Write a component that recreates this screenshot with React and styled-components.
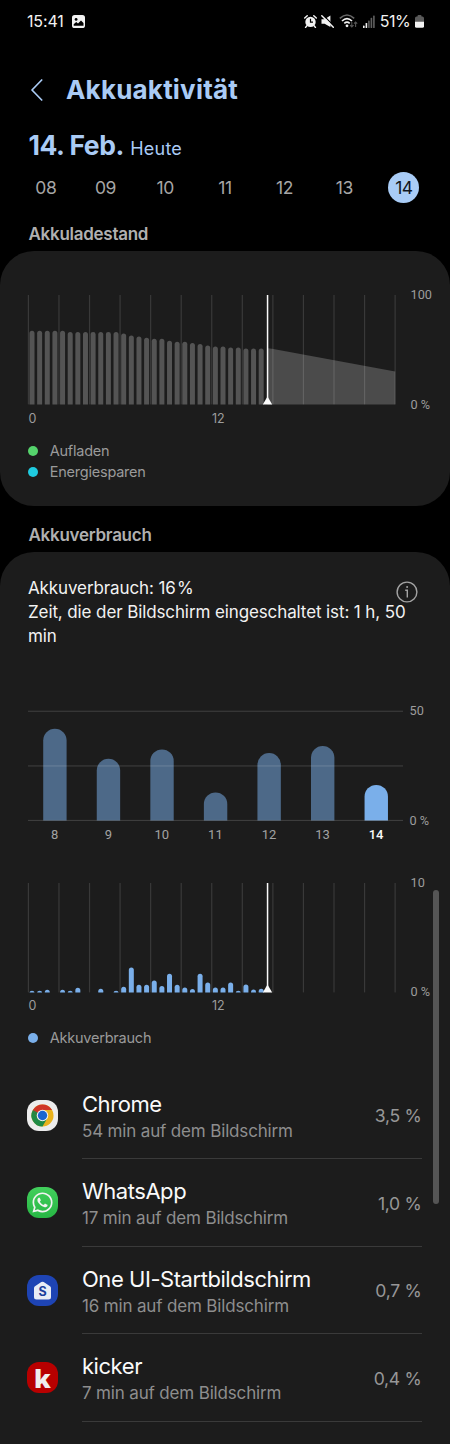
import React from "react";
import styled, { createGlobalStyle } from "styled-components";
import { FaWhatsapp } from "react-icons/fa";

const GlobalStyle = createGlobalStyle`
    * {
        box-sizing: border-box;
    }

    body {
        margin: 0;
        background: #000;
        font-family: Inter, Roboto, sans-serif;
    }
`;

const Screen = styled.main`
    position: relative;
    display: flex;
    flex-direction: column;
    width: 450px;
    height: 1444px;
    overflow: hidden;
    background: #000;
    color: #f5f5f5;
`;

const StatusBar = styled.div`
    display: flex;
    flex: none;
    align-items: center;
    justify-content: space-between;
    height: 42px;
    padding: 0 26px 0 27px;
    color: #f2f2f2;
`;

const StatusGroup = styled.div`
    display: flex;
    align-items: center;
    gap: ${props => props.$gap}px;
`;

const StatusText = styled.span`
    font-size: 16px;
    letter-spacing: ${props => props.$spacing};
    line-height: 20px;
`;

const Header = styled.header`
    display: flex;
    flex: none;
    align-items: center;
    height: 86px;
    padding: 9px 30px 0;
`;

const BackIcon = styled.svg`
    display: block;
    margin-right: 22px;
`;

const Title = styled.h1`
    margin: 0;
    font-size: 26px;
    font-weight: 700;
    letter-spacing: 0.2px;
    line-height: 34px;
    color: #aacbf5;
`;

const DateRow = styled.div`
    display: flex;
    flex: none;
    align-items: baseline;
    gap: 6.5px;
    height: 34px;
    padding: 0 28.5px;
    line-height: 34px;
    color: #aacbf5;
`;

const DateText = styled.span`
    font-size: 26.5px;
    font-weight: 700;
    letter-spacing: -0.45px;
`;

const DateHint = styled.span`
    font-size: 18px;
    letter-spacing: 0.2px;
`;

const Days = styled.div`
    display: grid;
    flex: none;
    grid-template-columns: repeat(7, 59.7px);
    justify-items: center;
    padding: 10px 0 0 16px;
`;

const Day = styled.span`
    width: 31px;
    height: 31px;
    border-radius: 50%;
    background: ${props => props.$active ? "#a9ccf6" : "transparent"};
    color: ${props => props.$active ? "#10151c" : "#a6a6a6"};
    font-size: 17.5px;
    letter-spacing: -0.4px;
    line-height: 31px;
    text-align: center;
`;

const SectionTitle = styled.h2`
    flex: none;
    margin: 0;
    padding: ${props => props.$top}px 28.5px 0;
    font-size: 17px;
    font-weight: 600;
    letter-spacing: -0.27px;
    line-height: 33px;
    color: #b0b0b0;
`;

const Card = styled.section`
    height: ${props => props.$height};
    flex: ${props => props.$height ? "none" : 1};
    padding: ${props => props.$top}px 28px 0;
    border-radius: ${props => props.$height ? "34px" : "34px 34px 0 0"};
    background: #1c1c1c;
`;

const Chart = styled.div`
    display: flex;
    gap: ${props => props.$gap}px;
    height: 109.4px;
    margin-top: ${props => props.$top || 0}px;
`;

const Plot = styled.svg`
    display: block;
    flex: none;
    overflow: visible;
`;

const Scale = styled.div`
    display: flex;
    flex-direction: column;
    justify-content: space-between;
    height: 127.4px;
    margin-top: -9px;
    font-family: Roboto, sans-serif;
    font-size: 12.7px;
    line-height: 18px;
    white-space: nowrap;
    color: #9d9d9d;
`;

const Hours = styled.div`
    display: grid;
    grid-template-columns: 183.5px 1fr;
    padding-left: 0.5px;
    font-size: 12.5px;
    line-height: 27px;
    color: #9d9d9d;
`;

const WeekDays = styled.div`
    display: grid;
    grid-template-columns: repeat(7, 53.56px);
    font-family: Roboto, sans-serif;
    font-size: 13px;
    line-height: 27px;
    text-align: center;
    color: #a3a3a3;
`;

const WeekDay = styled.span`
    color: ${props => props.$active ? "#fafafa" : "inherit"};
    font-weight: ${props => props.$active ? 500 : 400};
`;

const Legend = styled.div`
    display: flex;
    flex-direction: column;
    margin-top: 8.8px;
`;

const LegendItem = styled.div`
    display: flex;
    align-items: center;
    gap: 11.7px;
    height: 21.3px;
    font-size: 14.5px;
    letter-spacing: -0.22px;
    line-height: 21px;
    color: #9a9a9a;
`;

const LegendText = styled.span`
    margin-top: -1px;
`;

const Dot = styled.span`
    width: 10px;
    height: 10px;
    border-radius: 50%;
    background: ${props => props.$color};
`;

const Summary = styled.div`
    display: flex;
    height: 72px;
`;

const SummaryText = styled.p`
    flex: none;
    width: 384px;
    margin: 0;
    font-size: 17px;
    letter-spacing: -0.11px;
    line-height: 24px;
    color: #f2f2f2;
`;

const InfoIcon = styled.svg`
    flex: none;
    margin: 4.5px 0 0 -15.7px;
`;

const AppList = styled.div`
    margin: 22.6px 0 0 -1px;
`;

const AppRow = styled.div`
    display: flex;
    align-items: flex-start;
    gap: 24px;
    height: 87.5px;
`;

const AppIcon = styled.span`
    display: flex;
    flex: none;
    align-items: center;
    justify-content: center;
    width: 31px;
    height: 31px;
    margin-top: 28px;
    border-radius: 12px;
    background: ${props => props.$background};
    color: #f2f2f2;
`;

const LogoSvg = styled.svg`
    display: block;
    overflow: visible;
`;

const AppBody = styled.div`
    display: flex;
    align-items: flex-start;
    justify-content: space-between;
    width: 339.5px;
    height: 87.5px;
    padding-top: 18px;
    border-bottom: 1px solid #3a3a3a;
`;

const AppName = styled.h3`
    margin: 0;
    font-size: 22px;
    font-weight: 400;
    letter-spacing: -0.45px;
    line-height: 28px;
    color: #fafafa;
`;

const AppTime = styled.p`
    margin: 0;
    font-size: 17px;
    letter-spacing: -0.16px;
    line-height: 27.5px;
    color: #8e8e8e;
`;

const AppShare = styled.span`
    margin-top: 12.4px;
    font-size: 17.6px;
    letter-spacing: -0.3px;
    line-height: 28px;
    color: #979797;
`;

const ScrollThumb = styled.div`
    position: absolute;
    top: 890px;
    right: 11.3px;
    width: 5.4px;
    height: 314px;
    border-radius: 3px;
    background: #555;
`;

const days = ["08", "09", "10", "11", "12", "13", "14"];

const levels = [
    73.7, 73.7, 73.7, 73.7, 73.7, 72.3, 72.3, 72.3, 72.3, 72.3, 72.3, 72.3, 71, 69, 68, 66.7,
    65.7, 65.7, 63.7, 62.7, 62.7, 61.3, 60.3, 59, 58, 58, 57, 57, 56, 56, 56
];

const usage = [
    1.7, 1.7, 2.7, 0, 2.7, 1.7, 4.7, 0, 0, 3.7, 0, 1.7, 5.7, 25, 7.7, 7.7,
    12, 6.5, 18.7, 7.7, 4.8, 3.3, 18.7, 10, 4.8, 4.8, 10, 1.7, 7.8, 2.8, 3.7
];

const week = [
    { day: 8, height: 91.7 },
    { day: 9, height: 61.7 },
    { day: 10, height: 71 },
    { day: 11, height: 28 },
    { day: 12, height: 67.3 },
    { day: 13, height: 74.3 },
    { day: 14, height: 35.5, active: true }
];

// bar with a rounded top standing on y = base
const barPath = (x, width, height, base) => {
    const r = Math.min(width / 2, height);
    return `M${x} ${base}v${-(height - r)}a${width / 2} ${r} 0 0 1 ${width} 0v${height - r}z`;
};

const HourChart = ({ values, color, forecast, max, top }) => (
    <>
        <Chart $gap={15.5} $top={top}>
            <Plot width="367" height="109.4">
                {forecast && <path d="M239.5 53.3L244 53.8L367.2 76.5V109.4H239.5z" fill="#4b4b4b" />}
                {Array.from({ length: 13 }, (_, i) => (
                    <rect key={i} x={i * 30.56 - 0.2} y="0" width="1.2" height="109.4" fill="#fff" opacity="0.13" />
                ))}
                {values.map((value, i) => value > 0 && (
                    <path key={i} d={barPath(1.5 + i * 7.64, 5, value, 109.4)} fill={color} />
                ))}
                <rect x="238.8" y="0" width="1.5" height="106" fill="#fafafa" />
                <path d="M239.5 101.5L244.2 109.4H234.8z" fill="#fafafa" />
            </Plot>
            <Scale>
                <span>{max}</span>
                <span>0 %</span>
            </Scale>
        </Chart>
        <Hours>
            <span>0</span>
            <span>12</span>
        </Hours>
    </>
);

const WeekChart = () => (
    <>
        <Chart $gap={6.5} $top={63.1}>
            <Plot width="375" height="109.4">
                {week.map((item, i) => (
                    <path
                        key={item.day}
                        d={barPath(15.2 + i * 53.56, 23.4, item.height, 109.4)}
                        fill={item.active ? "#7aafea" : "#4d6988"}
                    />
                ))}
                {[0, 54.7, 109.2].map(y => (
                    <rect key={y} x="0" y={y - 0.3} width="375" height="1.1" fill="#fff" opacity="0.15" />
                ))}
            </Plot>
            <Scale>
                <span>50</span>
                <span>0 %</span>
            </Scale>
        </Chart>
        <WeekDays>
            {week.map(item => (
                <WeekDay key={item.day} $active={item.active}>{item.day}</WeekDay>
            ))}
        </WeekDays>
    </>
);

const ChromeLogo = () => (
    <LogoSvg width="23" height="23" viewBox="0 0 24 24">
        <circle cx="12" cy="12" r="11.5" fill="#e9b21c" />
        <path d="M12 12L2 6.2A11.5 11.5 0 0 0 12 23.5L17 14.9z" fill="#1f8a45" />
        <path d="M2 6.3A11.5 11.5 0 0 1 22 6.3H12L7 14.9z" fill="#cf3527" />
        <path d="M2 6.3L7 14.9L12 12z" fill="#1f8a45" />
        <circle cx="12" cy="12" r="6" fill="#f2f2f2" />
        <circle cx="12" cy="12" r="4.9" fill="#1b66cf" />
    </LogoSvg>
);

const HomeLogo = () => (
    <LogoSvg width="31" height="31" viewBox="0 0 31 31">
        <path d="M14.3 7.1Q15.5 6.2 16.7 7.1L23 11.3Q24 12 24 13.2V22Q24 24.5 21.5 24.5H9.5Q7 24.5 7 22V13.2Q7 12 8 11.3z" fill="#e8ecf5" />
        <text x="15.5" y="21" textAnchor="middle" fontFamily="Inter" fontSize="12.5" fontWeight="700" fill="#1c3f9c">S</text>
    </LogoSvg>
);

const KickerLogo = () => (
    <LogoSvg width="31" height="31" viewBox="0 0 31 31">
        <text x="15.4" y="25.8" textAnchor="middle" fontFamily="Open Sans" fontSize="25.5" fontWeight="800" fill="#f0eeee">k</text>
    </LogoSvg>
);

const apps = [
    { name: "Chrome", time: "54 min", share: "3,5 %", background: "#ececec", icon: <ChromeLogo /> },
    { name: "WhatsApp", time: "17 min", share: "1,0 %", background: "linear-gradient(#42cf5c, #27b744)", icon: <FaWhatsapp size={23} /> },
    { name: "One UI-Startbildschirm", time: "16 min", share: "0,7 %", background: "#1e44b4", icon: <HomeLogo /> },
    { name: "kicker", time: "7 min", share: "0,4 %", background: "#b80000", icon: <KickerLogo /> }
];

const PictureIcon = () => (
    <svg width="13" height="13" viewBox="0 0 13 13">
        <rect width="13" height="13" rx="2.6" fill="#f2f2f2" />
        <circle cx="4.1" cy="4.4" r="1.4" fill="#000" />
        <path d="M1.7 10.8V9.2L4.2 7L6 8.6L9 5.6L11.5 8V10.8z" fill="#000" />
    </svg>
);

const AlarmIcon = () => (
    <svg width="13" height="13" viewBox="0 0 13 13">
        <circle cx="6.5" cy="6.9" r="5.2" fill="#f2f2f2" />
        <path d="M0.7 3L3.2 0.8M12.3 3L9.8 0.8M2.9 10.8L1.6 12.4M10.1 10.8L11.4 12.4" stroke="#f2f2f2" strokeWidth="1.5" strokeLinecap="round" />
        <path d="M6.5 3.8V7.1H9" fill="none" stroke="#000" strokeWidth="1.2" />
    </svg>
);

const MuteIcon = () => (
    <svg width="13" height="13" viewBox="0 0 13 13">
        <path d="M0.5 4.2H3.6L9.4 0.6V12L3.6 8.8H0.5z" fill="#f2f2f2" />
        <path d="M1.8 -0.2L13 11" stroke="#000" strokeWidth="1.2" />
        <path d="M0.8 0.8L12.3 12.3" stroke="#f2f2f2" strokeWidth="1.5" strokeLinecap="round" />
    </svg>
);

const WifiIcon = () => (
    <svg width="19" height="14" viewBox="0 0 19 14">
        <path d="M0.8 4.4Q8 -2.4 15.2 4.4" fill="none" stroke="#666" strokeWidth="1.6" />
        <path d="M3 7Q8 2.2 13 7M5.3 9.4Q8 7 10.7 9.4" fill="none" stroke="#f2f2f2" strokeWidth="1.7" />
        <circle cx="8" cy="11.8" r="1.4" fill="#f2f2f2" />
        <path d="M12.8 8V13M11 11.2L12.8 13L14.6 11.2M16.6 13V8M15 9.6L16.6 8L18.2 9.6" fill="none" stroke="#555" strokeWidth="1.1" />
    </svg>
);

const SignalIcon = () => (
    <svg width="12" height="13" viewBox="0 0 12 13">
        <rect x="0" y="10.6" width="1.6" height="2.4" rx="0.6" fill="#f2f2f2" />
        <rect x="2.6" y="8" width="1.6" height="5" rx="0.6" fill="#f2f2f2" />
        <rect x="5.1" y="5.4" width="1.6" height="7.6" rx="0.6" fill="#606060" />
        <rect x="7.6" y="2.8" width="1.6" height="10.2" rx="0.6" fill="#606060" />
        <rect x="10.1" y="0.4" width="1.6" height="12.6" rx="0.6" fill="#606060" />
    </svg>
);

const BatteryIcon = () => (
    <svg width="9" height="13" viewBox="0 0 9 13">
        <path d="M2.5 1.6V1Q2.5 0 3.5 0H5.5Q6.5 0 6.5 1V1.6H7.4Q9 1.6 9 3.2V7H0V3.2Q0 1.6 1.6 1.6z" fill="#5a5a5a" />
        <path d="M0 6.8H9V11.2Q9 12.8 7.4 12.8H1.6Q0 12.8 0 11.2z" fill="#f2f2f2" />
    </svg>
);

const App = () => (
    <>
        <GlobalStyle />
        <Screen>
            <StatusBar>
                <StatusGroup $gap={8}>
                    <StatusText $spacing="-0.15px">15:41</StatusText>
                    <PictureIcon />
                </StatusGroup>
                <StatusGroup $gap={4.8}>
                    <AlarmIcon />
                    <MuteIcon />
                    <WifiIcon />
                    <SignalIcon />
                    <StatusText $spacing="-0.5px">51%</StatusText>
                    <BatteryIcon />
                </StatusGroup>
            </StatusBar>
            <Header>
                <BackIcon width="14" height="22" viewBox="0 0 14 22">
                    <path d="M11.7 1L2 11L11.7 21" fill="none" stroke="#aacbf5" strokeWidth="1.7" strokeLinecap="round" strokeLinejoin="round" />
                </BackIcon>
                <Title>Akkuaktivität</Title>
            </Header>
            <DateRow>
                <DateText>14. Feb.</DateText>
                <DateHint>Heute</DateHint>
            </DateRow>
            <Days>
                {days.map(day => (
                    <Day key={day} $active={day === "14"}>{day}</Day>
                ))}
            </Days>
            <SectionTitle $top={14.7}>Akkuladestand</SectionTitle>
            <Card $height="255px" $top={44.6}>
                <HourChart values={levels} color="#545454" max={100} forecast />
                <Legend>
                    <LegendItem><Dot $color="#55d36c" /><LegendText>Aufladen</LegendText></LegendItem>
                    <LegendItem><Dot $color="#1fcbe0" /><LegendText>Energiesparen</LegendText></LegendItem>
                </Legend>
            </Card>
            <SectionTitle $top={13}>Akkuverbrauch</SectionTitle>
            <Card $top={24.4}>
                <Summary>
                    <SummaryText>
                        Akkuverbrauch: 16&#8202;%<br />
                        Zeit, die der Bildschirm eingeschaltet ist: 1 h, 50 min
                    </SummaryText>
                    <InfoIcon width="22" height="22" viewBox="0 0 22 22">
                        <circle cx="11" cy="11" r="9.9" fill="none" stroke="#a3a3a3" strokeWidth="1.4" />
                        <path d="M9.2 9.3H11.3V16.6" fill="none" stroke="#a3a3a3" strokeWidth="1.4" />
                        <circle cx="11.1" cy="6" r="1" fill="#a3a3a3" />
                    </InfoIcon>
                </Summary>
                <WeekChart />
                <HourChart values={usage} color="#7aafea" max={10} top={35} />
                <Legend>
                    <LegendItem><Dot $color="#7aafea" /><LegendText>Akkuverbrauch</LegendText></LegendItem>
                </Legend>
                <AppList>
                    {apps.map(app => (
                        <AppRow key={app.name}>
                            <AppIcon $background={app.background}>{app.icon}</AppIcon>
                            <AppBody>
                                <div>
                                    <AppName>{app.name}</AppName>
                                    <AppTime>{app.time} auf dem Bildschirm</AppTime>
                                </div>
                                <AppShare>{app.share}</AppShare>
                            </AppBody>
                        </AppRow>
                    ))}
                </AppList>
            </Card>
            <ScrollThumb />
        </Screen>
    </>
);

export default App;
